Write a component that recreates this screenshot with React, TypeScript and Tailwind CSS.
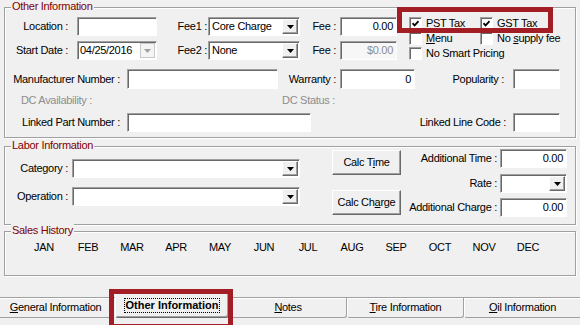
import type { ReactNode } from "react";

const sunken =
  "border border-t-[#a0a0a0] border-l-[#a0a0a0] border-r-white border-b-white shadow-[inset_1px_1px_0_#696969]";
const raised =
  "bg-[#f0f0f0] border border-t-white border-l-white border-r-[#696969] border-b-[#696969] shadow-[inset_-1px_-1px_0_#a0a0a0]";
const group =
  "relative border border-[#a0a0a0] shadow-[inset_1px_1px_0_#fff,1px_1px_0_#fff]";

function Arrow({ grey = false }: { grey?: boolean }) {
  return (
    <svg width="7" height="4" viewBox="0 0 7 4">
      <path d="M0 0h7L3.5 4z" fill={grey ? "#a0a0a0" : "#000"} />
    </svg>
  );
}

function Legend({ children }: { children: ReactNode }) {
  return (
    <span className="absolute -top-[8px] left-[6px] px-[1px] bg-[#f0f0f0] text-[#800000]">
      {children}
    </span>
  );
}

function Field({ className = "", value = "", right = false, dim = false }: { className?: string; value?: string; right?: boolean; dim?: boolean }) {
  return (
    <div
      className={`${sunken} ${dim ? "bg-[#f7f7f7] text-[#8d8d8d]" : "bg-white"} flex items-center px-[3px] shrink-0 ${right ? "justify-end" : ""} ${className}`}
    >
      {value}
    </div>
  );
}

function Select({ className = "", value = "" }: { className?: string; value?: string }) {
  return (
    <div className={`${sunken} bg-white flex items-stretch p-[1px] shrink-0 ${className}`}>
      <span className="flex-1 flex items-center pl-[2px]">{value}</span>
      <span className={`${raised} w-[16px] flex items-center justify-center`}>
        <Arrow />
      </span>
    </div>
  );
}

function Check({ checked = false, children }: { checked?: boolean; children: ReactNode }) {
  return (
    <div className="flex items-center h-[13px]">
      <span className={`${sunken} bg-white w-[13px] h-[13px] flex items-center justify-center shrink-0`}>
        {checked && (
          <svg width="7" height="7" viewBox="0 0 7 7">
            <path d="M0.5 3.2 L2.6 5.4 L6.5 1.2" stroke="#000" strokeWidth="1.7" fill="none" />
          </svg>
        )}
      </span>
      <span className="ml-[4px] whitespace-nowrap">{children}</span>
    </div>
  );
}

const months = ["JAN", "FEB", "MAR", "APR", "MAY", "JUN", "JUL", "AUG", "SEP", "OCT", "NOV", "DEC"];

export default function App() {
  return (
    <div className="relative w-[580px] h-[325px] overflow-hidden bg-[#f0f0f0] font-['Liberation_Sans',Arial,sans-serif] text-[11px] leading-[13px] tracking-[-0.3px] text-black">
      {/* Other Information */}
      <div className={`${group} mt-[7px] ml-[4px] w-[572px] h-[131px]`}>
        <Legend>Other Information</Legend>
        <div className="flex pt-[9px]">
          <div className="flex flex-col gap-[5px]">
            <div className="flex items-center h-[19px]">
              <span className="w-[63px] text-right shrink-0">Location :</span>
              <Field className="ml-[9px] w-[80px] h-[19px]" />
              <span className="w-[50px] text-right shrink-0">Fee1 :</span>
              <Select className="ml-[1px] w-[92px] h-[19px]" value="Core Charge" />
              <span className="w-[36px] text-right shrink-0">Fee :</span>
              <Field className="ml-[4px] w-[57px] h-[19px]" value="0.00" right />
            </div>
            <div className="flex items-center h-[19px]">
              <span className="w-[63px] text-right shrink-0">Start Date :</span>
              <div className={`${sunken} bg-white ml-[9px] w-[80px] h-[19px] flex items-stretch p-[1px] shrink-0`}>
                <span className="flex-1 flex items-center pl-[1px]">04/25/2016</span>
                <span className="w-[15px] border border-[#c8c8c8] bg-[#f4f4f4] flex items-center justify-center">
                  <Arrow grey />
                </span>
              </div>
              <span className="w-[50px] text-right shrink-0">Fee2 :</span>
              <Select className="ml-[1px] w-[92px] h-[19px]" value="None" />
              <span className="w-[36px] text-right shrink-0">Fee :</span>
              <Field className="ml-[4px] w-[57px] h-[19px]" value="$0.00" right dim />
            </div>
          </div>
          <div className="ml-[12px] flex flex-col gap-[2px]">
            <div className="flex">
              <div className="w-[71px]">
                <Check checked>PST Tax</Check>
              </div>
              <Check checked>GST Tax</Check>
            </div>
            <div className="flex">
              <div className="w-[71px]">
                <Check>
                  <u>M</u>enu
                </Check>
              </div>
              <Check>
                No <u>s</u>upply fee
              </Check>
            </div>
            <Check>No Smart Pricing</Check>
          </div>
        </div>

        <div className="flex items-center h-[20px] mt-[9px]">
          <span className="w-[115px] text-right shrink-0">Manufacturer Number :</span>
          <Field className="ml-[7px] w-[151px] h-[20px]" />
          <span className="w-[58px] text-right shrink-0">Warranty :</span>
          <Field className="ml-[4px] w-[75px] h-[20px]" value="0" right />
          <span className="w-[89px] text-right shrink-0">Popularity :</span>
          <Field className="ml-[9px] w-[47px] h-[20px]" />
        </div>

        <div className="flex items-center h-[13px] mt-[5px] text-[#8d8d8d]">
          <span className="w-[87px] text-right shrink-0">DC Availability :</span>
          <span className="w-[243px] text-right shrink-0">DC Status :</span>
        </div>

        <div className="flex items-center h-[19px] mt-[6px]">
          <span className="w-[115px] text-right shrink-0">Linked Part Number :</span>
          <Field className="ml-[7px] w-[184px] h-[19px]" />
          <span className="w-[195px] text-right shrink-0">Linked Line Code :</span>
          <Field className="ml-[7px] w-[47px] h-[19px]" />
        </div>
      </div>

      {/* Labor Information */}
      <div className={`${group} mt-[8px] ml-[4px] w-[572px] h-[79px] flex`}>
        <Legend>Labor Information</Legend>
        <div className="pt-[12px] flex flex-col gap-[9px]">
          <div className="flex items-center h-[19px]">
            <span className="w-[63px] text-right shrink-0">Category :</span>
            <Select className="ml-[4px] w-[228px] h-[19px]" />
          </div>
          <div className="flex items-center h-[19px]">
            <span className="w-[63px] text-right shrink-0">Operation :</span>
            <Select className="ml-[4px] w-[228px] h-[19px]" />
          </div>
        </div>
        <div className="ml-[32px] pt-[3px] flex flex-col gap-[15px]">
          <button className={`${raised} w-[69px] h-[25px]`}>
            Calc T<u>i</u>me
          </button>
          <button className={`${raised} w-[69px] h-[25px]`}>
            Calc Ch<u>a</u>rge
          </button>
        </div>
        <div className="pt-[2px] flex flex-col">
          <div className="flex items-center h-[19px]">
            <span className="w-[96px] text-right shrink-0">Additional Time :</span>
            <Field className="ml-[3px] w-[67px] h-[19px]" value="0.00" right />
          </div>
          <div className="flex items-center h-[19px] mt-[6px]">
            <span className="w-[96px] text-right shrink-0">Rate :</span>
            <Select className="ml-[3px] w-[67px] h-[19px]" />
          </div>
          <div className="flex items-center h-[19px] mt-[5px]">
            <span className="w-[96px] text-right shrink-0">Additional Charge :</span>
            <Field className="ml-[3px] w-[67px] h-[19px]" value="0.00" right />
          </div>
        </div>
      </div>

      {/* Sales History */}
      <div className={`${group} mt-[6px] ml-[4px] w-[572px] h-[45px]`}>
        <Legend>Sales History</Legend>
        <div className="ml-[17px] mt-[9px] w-[528px] grid grid-cols-12 text-center">
          {months.map((m) => (
            <span key={m}>{m}</span>
          ))}
        </div>
      </div>

      {/* Tabs */}
      <div className="mt-[21px] flex border-t border-[#a0a0a0] shadow-[inset_0_1px_0_#fff]">
        <div className="w-[112px] h-[20px] flex items-center justify-center border-b border-r border-[#a0a0a0] rounded-br-[3px]">
          <span>
            <u>G</u>eneral Information
          </span>
        </div>
        <div className="w-[118px] pl-[3px] pr-[1px]">
          <div className="-mt-[5px] h-[25px] flex items-center justify-center bg-[#f0f0f0] border border-t-white border-l-white border-r-[#696969] border-b-[#696969] rounded-b-[3px] shadow-[inset_-1px_-1px_0_#a0a0a0]">
            <span className="font-bold tracking-normal px-[1px] outline outline-1 outline-dotted outline-black">Other Information</span>
          </div>
        </div>
        <div className="w-[117px] h-[20px] flex items-center justify-center border-b border-r border-[#a0a0a0] rounded-b-[3px]">
          <span>
            <u>N</u>otes
          </span>
        </div>
        <div className="w-[117px] h-[20px] flex items-center justify-center border-b border-x border-l-white border-r-[#a0a0a0] border-b-[#a0a0a0] rounded-b-[3px]">
          <span>
            <u>T</u>ire Information
          </span>
        </div>
        <div className="flex-1 h-[20px] flex items-center justify-center border-b border-l border-l-white border-b-[#a0a0a0] rounded-bl-[3px]">
          <span>
            <u>O</u>il Information
          </span>
        </div>
      </div>

      {/* annotation highlights */}
      <div className="absolute left-[397px] top-[7px] w-[156px] h-[26px] border-[5px] border-[#a31d24]" />
      <div className="absolute left-[109px] top-[289px] w-[124px] h-[40px] border-[5px] border-[#a31d24]" />
    </div>
  );
}
